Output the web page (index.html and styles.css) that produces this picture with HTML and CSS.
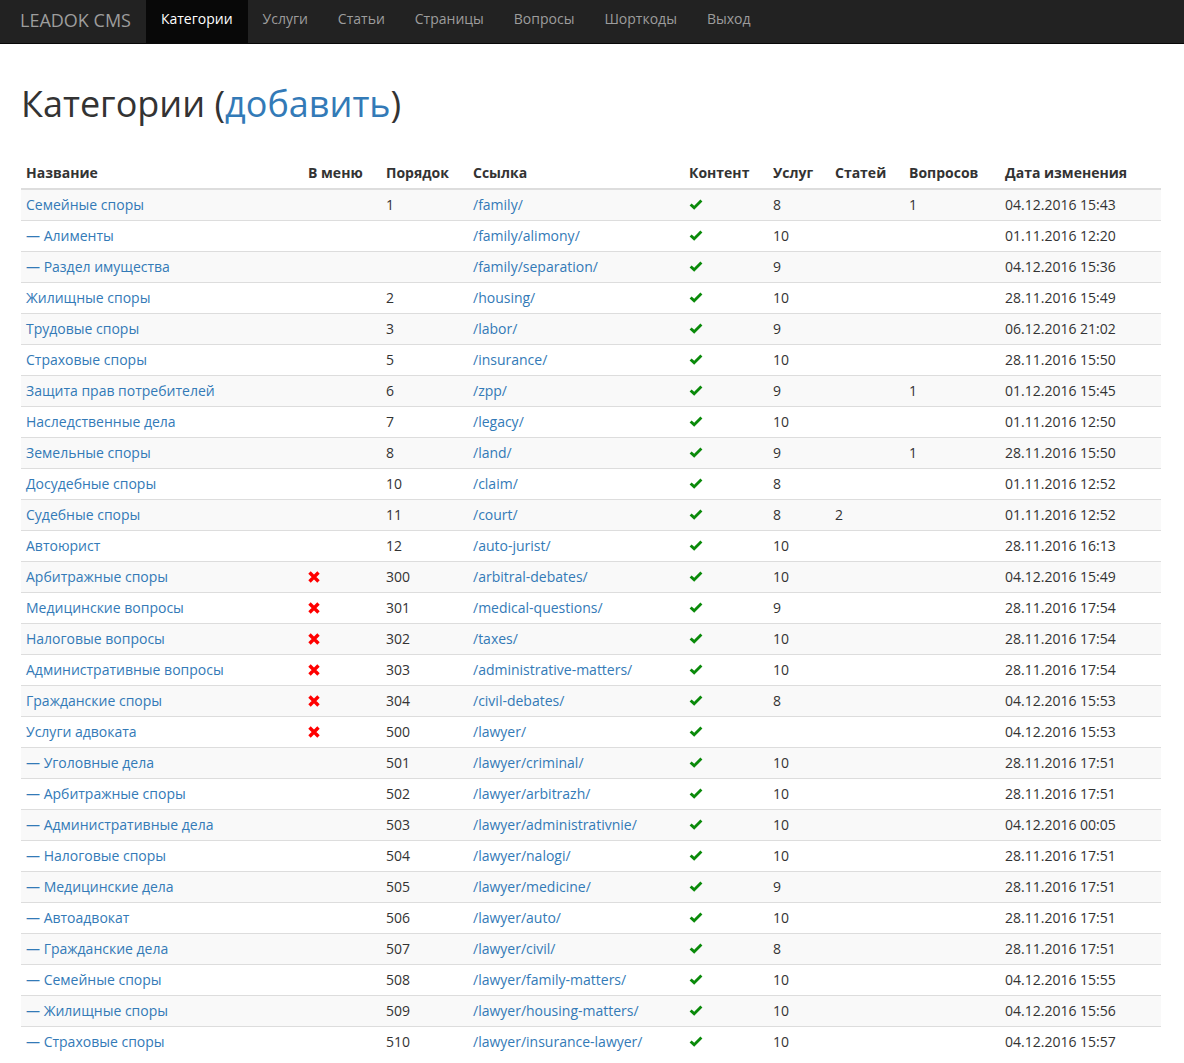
FILE: index.html
```html
<!DOCTYPE html>
<html lang="ru">
<head>
<meta charset="utf-8">
<title>Категории — LEADOK CMS</title>
<link rel="stylesheet" href="styles.css">
</head>
<body>
<nav class="navbar">
  <a class="brand" href="#">LEADOK CMS</a>
  <ul class="nav">
    <li class="active"><a href="#">Категории</a></li>
    <li><a href="#">Услуги</a></li>
    <li><a href="#">Статьи</a></li>
    <li><a href="#">Страницы</a></li>
    <li><a href="#">Вопросы</a></li>
    <li><a href="#">Шорткоды</a></li>
    <li><a href="#">Выход</a></li>
  </ul>
</nav>
<main class="page">
  <h1 class="title">Категории (<a href="#">добавить</a>)</h1>
  <table class="table">
    <colgroup>
      <col class="c-name"><col class="c-menu"><col class="c-order"><col class="c-link"><col class="c-content"><col class="c-serv"><col class="c-art"><col class="c-q"><col class="c-date">
    </colgroup>
    <thead>
      <tr><th>Название</th><th>В меню</th><th>Порядок</th><th>Ссылка</th><th>Контент</th><th>Услуг</th><th>Статей</th><th>Вопросов</th><th>Дата изменения</th></tr>
    </thead>
    <tbody id="rows"></tbody>
  </table>
</main>
<script src="app.js"></script>
</body>
</html>
```

FILE: app.js
```js
var data = [
  ["Семейные споры", 0, "1", "/family/", "8", "", "1", "04.12.2016 15:43"],
  ["— Алименты", 0, "", "/family/alimony/", "10", "", "", "01.11.2016 12:20"],
  ["— Раздел имущества", 0, "", "/family/separation/", "9", "", "", "04.12.2016 15:36"],
  ["Жилищные споры", 0, "2", "/housing/", "10", "", "", "28.11.2016 15:49"],
  ["Трудовые споры", 0, "3", "/labor/", "9", "", "", "06.12.2016 21:02"],
  ["Страховые споры", 0, "5", "/insurance/", "10", "", "", "28.11.2016 15:50"],
  ["Защита прав потребителей", 0, "6", "/zpp/", "9", "", "1", "01.12.2016 15:45"],
  ["Наследственные дела", 0, "7", "/legacy/", "10", "", "", "01.11.2016 12:50"],
  ["Земельные споры", 0, "8", "/land/", "9", "", "1", "28.11.2016 15:50"],
  ["Досудебные споры", 0, "10", "/claim/", "8", "", "", "01.11.2016 12:52"],
  ["Судебные споры", 0, "11", "/court/", "8", "2", "", "01.11.2016 12:52"],
  ["Автоюрист", 0, "12", "/auto-jurist/", "10", "", "", "28.11.2016 16:13"],
  ["Арбитражные споры", 1, "300", "/arbitral-debates/", "10", "", "", "04.12.2016 15:49"],
  ["Медицинские вопросы", 1, "301", "/medical-questions/", "9", "", "", "28.11.2016 17:54"],
  ["Налоговые вопросы", 1, "302", "/taxes/", "10", "", "", "28.11.2016 17:54"],
  ["Административные вопросы", 1, "303", "/administrative-matters/", "10", "", "", "28.11.2016 17:54"],
  ["Гражданские споры", 1, "304", "/civil-debates/", "8", "", "", "04.12.2016 15:53"],
  ["Услуги адвоката", 1, "500", "/lawyer/", "", "", "", "04.12.2016 15:53"],
  ["— Уголовные дела", 0, "501", "/lawyer/criminal/", "10", "", "", "28.11.2016 17:51"],
  ["— Арбитражные споры", 0, "502", "/lawyer/arbitrazh/", "10", "", "", "28.11.2016 17:51"],
  ["— Административные дела", 0, "503", "/lawyer/administrativnie/", "10", "", "", "04.12.2016 00:05"],
  ["— Налоговые споры", 0, "504", "/lawyer/nalogi/", "10", "", "", "28.11.2016 17:51"],
  ["— Медицинские дела", 0, "505", "/lawyer/medicine/", "9", "", "", "28.11.2016 17:51"],
  ["— Автоадвокат", 0, "506", "/lawyer/auto/", "10", "", "", "28.11.2016 17:51"],
  ["— Гражданские дела", 0, "507", "/lawyer/civil/", "8", "", "", "28.11.2016 17:51"],
  ["— Семейные споры", 0, "508", "/lawyer/family-matters/", "10", "", "", "04.12.2016 15:55"],
  ["— Жилищные споры", 0, "509", "/lawyer/housing-matters/", "10", "", "", "04.12.2016 15:56"],
  ["— Страховые споры", 0, "510", "/lawyer/insurance-lawyer/", "10", "", "", "04.12.2016 15:57"]
];
var ok = '<svg class="ico ico-ok" width="14" height="12" viewBox="0 0 14 12"><path d="M0.6 6.4 L2.6 4.4 L5.2 6.8 L11.4 0.6 L13.4 2.6 L5.2 10.8 Z" fill="#0a8a0a"/></svg>';
var no = '<svg class="ico ico-no" width="12" height="12" viewBox="0 0 12 12"><path d="M1.5 1.5 L10.5 10.5 M10.5 1.5 L1.5 10.5" stroke="#ff0000" stroke-width="3.4" stroke-linecap="butt"/></svg>';
var html = "";
data.forEach(function (r) {
  html += "<tr>" +
    '<td><a href="#">' + r[0] + "</a></td>" +
    "<td>" + (r[1] ? no : "") + "</td>" +
    "<td>" + r[2] + "</td>" +
    '<td><a href="#">' + r[3] + "</a></td>" +
    "<td>" + ok + "</td>" +
    "<td>" + r[4] + "</td>" +
    "<td>" + r[5] + "</td>" +
    "<td>" + r[6] + "</td>" +
    "<td>" + r[7] + "</td>" +
    "</tr>";
});
document.getElementById("rows").innerHTML = html;
```

FILE: styles.css
```css
* { box-sizing: border-box; }
html, body { margin: 0; padding: 0; }
body {
  font-family: "Open Sans", "Noto Sans", sans-serif;
  font-size: 14px;
  line-height: 20px;
  color: #333;
  background: #fff;
}
a { color: #337ab7; text-decoration: none; }

.navbar {
  display: flex;
  align-items: stretch;
  height: 44px;
  background: #222;
  border-bottom: 1px solid #080808;
}
.brand {
  display: block;
  padding: 10px 15px 0 20px;
  font-size: 18px;
  line-height: 20px;
  color: #9d9d9d;
}
.nav {
  display: flex;
  list-style: none;
  margin: 0;
  padding: 0;
}
.nav li a {
  display: block;
  height: 43px;
  padding: 9px 15px 0;
  line-height: 20px;
  color: #9d9d9d;
}
.nav li.active a {
  background: #080808;
  color: #fff;
}

.page {
  padding: 0 23px 0 21px;
}
.title {
  margin: 40px 0 34px;
  font-size: 36px;
  line-height: 40px;
  font-weight: 400;
  color: #333;
}

.table {
  width: 1140px;
  table-layout: fixed;
  border-collapse: collapse;
  border-spacing: 0;
}
.c-name { width: 282px; }
.c-menu { width: 78px; }
.c-order { width: 87px; }
.c-link { width: 216px; }
.c-content { width: 84px; }
.c-serv { width: 62px; }
.c-art { width: 74px; }
.c-q { width: 96px; }
.c-date { width: 161px; }

.table th, .table td {
  padding: 5px;
  line-height: 20px;
  text-align: left;
  white-space: nowrap;
}
.table th {
  font-weight: 700;
  vertical-align: bottom;
  border-bottom: 2px solid #ddd;
}
.table td {
  vertical-align: top;
  border-top: 1px solid #ddd;
}
.table tbody tr:nth-child(odd) { background: #f9f9f9; }

.ico {
  display: inline-block;
  vertical-align: -1px;
}
```
